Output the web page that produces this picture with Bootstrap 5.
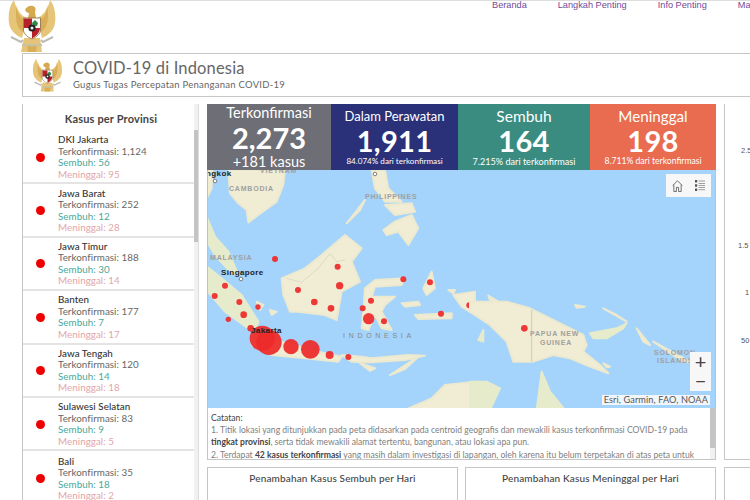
<!DOCTYPE html>
<html lang="id">
<head>
  <meta charset="UTF-8">
  <title>COVID-19 di Indonesia</title>
  <meta name="viewport" content="width=device-width, initial-scale=1">
  <link href="https://cdn.jsdelivr.net/npm/bootstrap@5.3.3/dist/css/bootstrap.min.css" rel="stylesheet">
  <style>
    html, body { height: 500px; overflow: hidden; }
    body { font-family: Lato, "Open Sans", sans-serif; color: #444; background: #fff; border-top: 1px solid #ddd; }

    /* top bar */
    .top-bar { height: 52px; }
    .top-logo { width: 48px; height: 53px; margin-left: 8px; margin-top: -1px; flex: none; }
    .top-links { position: absolute; left: 492px; top: 0; gap: 31px; white-space: nowrap; }
    .top-links a { font: 9.2px/9px "Liberation Sans", Arial, sans-serif; color: #6f4a9a; text-decoration: none; }

    /* page title */
    .title-box { margin-left: 22px; height: 44px; border: 1px solid #c6c6c6; border-right: 0; }
    .title-logo { width: 31px; height: 33px; margin: 0 10px 0 9px; flex: none; }
    .title-text { margin-bottom: 2px; }
    .title-main { font-size: 16.5px; line-height: 20px; color: #666; letter-spacing: .15px; }
    .title-sub { font-size: 9.5px; line-height: 12px; color: #666; margin-top: 1px; letter-spacing: .25px; }

    .main-grid { display: grid; grid-template-columns: 177px 509px 40px; column-gap: 8px; margin: 7px 0 0 22px; }

    /* province list */
    .prov-panel { height: 396px; overflow: hidden; border-left: 1px solid #c6c6c6; }
    .prov-title { font-size: 11px; font-weight: 700; color: #444; text-align: center; height: 27px; line-height: 29px; letter-spacing: .15px; }
    .prov-scroll { width: 5px; background: #f1f1f1; border-right: 1px solid #ddd; top: 0; right: 0; bottom: 0; }
    .prov-thumb { background: #c4c4c4; height: 112px; margin-top: 26px; }
    .prov-row { height: 53.4px; padding: 1px 5px 0 0; border-bottom: 2px solid #e4e4e4; font-size: 9.8px; line-height: 11.5px; letter-spacing: .05px; white-space: nowrap; }
    .prov-row:last-child { border-bottom: 0; }
    .prov-dot { width: 9px; height: 9px; border-radius: 50%; background: #ee0000; margin: 0 13px 0 13px; flex: none; }
    .prov-name { color: #333; font-weight: 500; }
    .prov-conf { color: #666; }
    .prov-heal { color: #4aa898; }
    .prov-dead { color: #e3a5a9; }

    /* counters */
    .stat-row { display: grid; grid-template-columns: 124px 127px 132px 126px; height: 66px; }
    .stat-cell { color: #fff; text-align: center; overflow: hidden; white-space: nowrap; }
    .stat-gray { background: #6d6e76; }
    .stat-navy { background: #2a3179; }
    .stat-teal { background: #3a8c80; }
    .stat-red { background: #e96b50; }
    .stat-head { font-size: 13px; line-height: 18px; padding-top: 3px; }
    .stat-big { font-size: 29px; font-weight: 700; line-height: 31px; letter-spacing: .3px; }
    .stat-foot { font-size: 8.1px; line-height: 11px; }
    .stat-gray .stat-head { font-size: 14.5px; padding-top: 0; }
    .stat-gray .stat-big { letter-spacing: 0; }
    .stat-gray .stat-foot { font-size: 14.5px; line-height: 16px; padding-top: 1px; }
    .stat-teal .stat-head { font-size: 15.5px; }
    .stat-teal .stat-foot { font-size: 9.1px; }
    .stat-red .stat-head { font-size: 15.2px; }
    .stat-red .stat-foot { font-size: 8.6px; }

    /* map */
    .map-box { height: 238px; background: #a4d3fb; border-left: 1px solid #c0c0c0; border-right: 1px solid #c0c0c0; overflow: hidden; }
    .map-box svg { display: block; }
    .map-tools { top: 4px; right: 4px; width: 45px; height: 23px; background: #f7f7f7; gap: 12px; }
    .map-zoom { right: 4px; top: 182px; width: 21px; height: 39px; background: #f7f7f7; color: #444; font-size: 20px; line-height: 19px; text-align: center; }
    .map-credit { right: 5px; top: 225px; height: 10px; padding: 0 2px; background: #f2f6fa; font-size: 9.2px; line-height: 10px; color: #555; letter-spacing: .1px; white-space: nowrap; }
    .land { fill: #f1edd4; stroke: #ece9cf; stroke-width: 6; stroke-linejoin: round; filter: blur(.5px); }
    .land-green { fill: #e6ebcb; stroke: #e6ebcb; }
    .spot { fill: #ee2a2a; fill-opacity: .93; }
    .map-label { font-family: "Liberation Sans", Arial, sans-serif; font-size: 7px; fill: #a0a0a0; letter-spacing: .8px; font-weight: 700; }
    .map-wide { letter-spacing: 3.7px; font-weight: 400; fill: #888; }
    .map-city { font-family: "Liberation Sans", Arial, sans-serif; font-size: 8px; fill: #222; font-weight: 700; letter-spacing: .4px; }

    /* notes */
    .note-box { height: 52px; overflow: hidden; border: 1px solid #c6c6c6; border-top: 0; padding: 4px 8px 0 3px; font-size: 8.6px; line-height: 12.2px; color: #808080; }
    .note-box b { color: #444; }
    .note-head { color: #444; }
    .note-scroll { width: 5px; top: 0; right: 0; bottom: 0; background: #f1f1f1; }
    .note-thumb { height: 40px; background: #c4c4c4; }

    /* lower cards */
    .lower-row { display: grid; grid-template-columns: 1fr 1fr; gap: 7px; margin-top: 7px; }
    .lower-card { height: 60px; border: 1px solid #c6c6c6; text-align: center; font-size: 10px; font-weight: 500; color: #444; padding-top: 4px; line-height: 13px; letter-spacing: .15px; }

    /* right column, chart cut off by the window edge */
    .side-chart { height: 356px; border-left: 1px solid #c6c6c6; border-bottom: 1px solid #c6c6c6; font: 7.5px/9px "Liberation Sans", Arial, sans-serif; color: #555; }
    .side-tick { left: 16px; }
    .tick-a { top: 42px; }
    .tick-b { top: 137px; left: 13px; }
    .tick-c { top: 184px; left: 20px; }
    .tick-d { top: 232px; left: 16px; }
    .side-lower { height: 60px; border: 1px solid #c6c6c6; border-right: 0; margin-top: 7px; }
  </style>
</head>
<body>

<svg width="0" height="0" class="position-absolute">
  <symbol id="garuda" viewBox="0 0 48 53">
    <path fill="#e6c578" d="M6 0C1 6 0 15 1 23c1 7 6 12 13 15l5-20C13 16 8 9 6 0Z"/>
    <path fill="#e6c578" d="M42 0c5 6 6 15 5 23-1 7-6 12-13 15l-5-20c6-2 11-9 13-18Z"/>
    <path fill="#d9ae58" d="M9 5c0 8 3 13 8 15l-2 12C10 29 6 22 9 5ZM39 5c0 8-3 13-8 15l2 12c5-3 9-10 6-27Z"/>
    <path fill="#d6a94f" d="M17 10c1-3 5-5 8-4 3 1 3 4 2 6l1 6H20l1-5c-2 0-3-1-4-3Z"/>
    <path fill="#e6c578" d="M16 38h16l2 14H13Z"/>
    <path fill="#d9ae58" d="M19 44h10l-1 8h-8Z"/>
    <path fill="none" stroke="#bdbdb5" stroke-width="2.2" d="M3 37l10 5 2-2M45 37l-10 5-2-2"/>
    <path fill="none" stroke="#c9c2a0" stroke-width="2.4" d="M14 45h20"/>
    <path fill="#fff" stroke="#7b5a2a" stroke-width=".7" d="M15.500 18h17v12c0 4-4 7-8.500 9-4.500-2-8.500-5-8.500-9Z"/>
    <path fill="#b5222a" d="M16 18.500h8V28h-8ZM24 28h8c0 5-4 8-8 10.500Z"/>
    <path fill="#2d8a45" d="M27 20l3 3-1 3h-4l-1-3Z"/>
    <circle cx="24" cy="28" r="3.600" fill="#222"/>
    <circle cx="24" cy="28" r="1.500" fill="#eee"/>
  </symbol>
</svg>

<div class="top-bar d-flex position-relative">
  <svg class="top-logo"><use href="#garuda"/></svg>
  <nav class="top-links d-flex">
    <a href="#">Beranda</a>
    <a href="#">Langkah Penting</a>
    <a href="#">Info Penting</a>
    <a href="#">Materi</a>
  </nav>
</div>

<div class="title-box d-flex align-items-center">
  <svg class="title-logo"><use href="#garuda"/></svg>
  <div class="title-text">
    <div class="title-main">COVID-19 di Indonesia</div>
    <div class="title-sub">Gugus Tugas Percepatan Penanganan COVID-19</div>
  </div>
</div>

<div class="main-grid">
  <!-- Provinces -->
  <div class="prov-panel position-relative">
    <div class="prov-title">Kasus per Provinsi</div>
    <div class="prov-scroll position-absolute"><div class="prov-thumb"></div></div>
    <div id="provList"></div>
  </div>

  <!-- Centre column -->
  <div>
    <div class="stat-row">
      <div class="stat-cell stat-gray">
        <div class="stat-head">Terkonfirmasi</div>
        <div class="stat-big">2,273</div>
        <div class="stat-foot">+181 kasus</div>
      </div>
      <div class="stat-cell stat-navy">
        <div class="stat-head">Dalam Perawatan</div>
        <div class="stat-big">1,911</div>
        <div class="stat-foot">84.074% dari terkonfirmasi</div>
      </div>
      <div class="stat-cell stat-teal">
        <div class="stat-head">Sembuh</div>
        <div class="stat-big">164</div>
        <div class="stat-foot">7.215% dari terkonfirmasi</div>
      </div>
      <div class="stat-cell stat-red">
        <div class="stat-head">Meninggal</div>
        <div class="stat-big">198</div>
        <div class="stat-foot">8.711% dari terkonfirmasi</div>
      </div>
    </div>

    <div class="map-box position-relative">
      <svg width="507" height="238" viewBox="1 0 507 238">
        <!-- west half, traced at 3x -->
        <g transform="translate(-2 -5) scale(.3333)">
          <path class="land" d="M70 15H240L235 60 215 110 160 150 130 172 125 135 100 115 75 85ZM0 15H22L20 70 5 100 0 110Z"/>
          <path class="land land-green" d="M5 155 30 215 70 260 100 330 75 320 30 270 0 220ZM0 300 50 340 110 390 160 470 150 500 130 490 60 440 0 370Z"/>
          <path class="land" d="M140 510 230 530 340 560 410 575 400 590 300 580 200 570 140 540ZM410 570 470 575 500 580 610 570 660 572 600 585 500 592 440 590ZM555 630 640 575 600 612ZM465 595 510 610 495 618Z"/>
          <path class="land" d="M230 340 300 310 350 270 420 210 470 250 440 290 465 350 410 380 395 465 360 450 280 440 255 440 235 390Z"/>
          <path fill="none" stroke="#c9c4b4" stroke-width="1.500" d="M245 340 290 352 340 310 375 265 395 290 420 285"/>
          <path class="land" d="M475 440 480 370 510 345 600 340 590 360 510 365 500 395 570 395 540 420 530 440 560 495 530 490 510 450 490 495 470 490ZM590 415 640 410 645 420 600 425Z"/>
          <path class="land" d="M500 15H540L550 70 590 110 540 110 510 70ZM535 195 570 170 620 150 640 190 610 240 580 200 545 210ZM425 175 480 105 465 135ZM540 120 620 115 630 140 570 150Z"/>
          <path class="land" d="M655 370 680 320 690 370 665 390ZM630 450 740 445 740 460 640 462ZM745 390 810 380 810 450 770 425ZM730 375 750 375 745 385ZM610 730 680 700 720 660 810 650 810 735 610 735ZM155 410 175 420 165 435ZM195 435 215 440 200 450Z"/>
          <g class="spots">
            <circle class="spot" cx="210" cy="282" r="9"/><circle class="spot" cx="398" cy="305" r="9"/>
            <circle class="spot" cx="60" cy="362" r="9"/><circle class="spot" cx="29" cy="393" r="9"/>
            <circle class="spot" cx="103" cy="411" r="9"/><circle class="spot" cx="159" cy="426" r="8"/>
            <circle class="spot" cx="116" cy="449" r="10"/><circle class="spot" cx="70" cy="463" r="8"/>
            <circle class="spot" cx="137" cy="490" r="10"/><circle class="spot" cx="279" cy="375" r="9"/>
            <circle class="spot" cx="404" cy="362" r="11"/><circle class="spot" cx="328" cy="411" r="10"/>
            <circle class="spot" cx="378" cy="430" r="10"/><circle class="spot" cx="595" cy="343" r="9"/>
            <circle class="spot" cx="675" cy="352" r="9"/><circle class="spot" cx="498" cy="407" r="9"/>
            <circle class="spot" cx="473" cy="430" r="9"/><circle class="spot" cx="491" cy="461" r="17"/>
            <circle class="spot" cx="537" cy="469" r="9"/><circle class="spot" cx="793" cy="421" r="9"/>
            <circle class="spot" cx="708" cy="446" r="9"/><circle class="spot" cx="172" cy="520" r="38"/>
            <circle class="spot" cx="192" cy="532" r="38"/><circle class="spot" cx="258" cy="545" r="23"/>
            <circle class="spot" cx="316" cy="553" r="28"/><circle class="spot" cx="374" cy="570" r="12"/>
            <circle class="spot" cx="430" cy="576" r="9"/>
          </g>
        </g>
        <!-- east half -->
        <g transform="translate(263 -5) scale(.3333)">
          <path class="land" d="M0 410 50 410 110 410 180 430 260 470 340 510 350 540 340 560 390 600 415 625 360 605 300 580 250 570 190 590 130 590 110 530 60 480 30 460 0 440Z"/>
          <path fill="none" stroke="#bdbab0" stroke-width="2" d="M185 435V590"/>
          <path class="land land-green" d="M360 505 440 490 470 475 460 490 410 520 370 520ZM0 650 50 650 90 670 60 735 0 735ZM200 735 215 620 240 680 285 735ZM25 525 40 495 40 530Z"/>
          <path class="land" d="M400 430 470 470 440 450ZM500 490 540 540 520 530ZM550 530 660 590 640 590ZM315 420 345 425 320 428ZM55 392 85 410 60 405ZM400 595 420 605 410 607Z"/>
          <circle class="spot" cx="163" cy="490" r="10"/>
        </g>
        <text class="map-label" x="22" y="21">CAMBODIA</text>
        <text class="map-label" x="53" y="3">VIETNAM</text>
        <text class="map-label" x="158" y="29">PHILIPPINES</text>
        <text class="map-label" x="3" y="90">MALAYSIA</text>
        <text class="map-label map-wide" x="136" y="168">INDONESIA</text>
        <text class="map-label" x="323" y="166">PAPUA NEW</text>
        <text class="map-label" x="333" y="175">GUINEA</text>
        <text class="map-label" x="447" y="185">SOLOMON</text>
        <text class="map-label" x="450" y="193">ISLANDS</text>
        <text class="map-city" x="-1" y="6">ngkok</text>
        <text class="map-city" x="14" y="105">Singapore</text>
        <text class="map-city" x="44" y="163">Jakarta</text>
        <circle cx="8" cy="11" r="1.800" fill="#fff" stroke="#666" stroke-width=".8"/>
        <circle cx="34" cy="109" r="1.800" fill="#fff" stroke="#666" stroke-width=".8"/>
        <circle cx="168" cy="4" r="1.800" fill="#fff" stroke="#666" stroke-width=".8"/>
      </svg>

      <div class="map-tools position-absolute d-flex align-items-center justify-content-center">
        <svg width="11" height="12" viewBox="0 0 12 13" fill="none" stroke="#666" stroke-width="1">
          <path d="M.8 6 6 .8 11.200 6M2 5v7.500h2.800V8h2.400v4.500H10V5"/>
        </svg>
        <svg width="10" height="11" viewBox="0 0 10 11" stroke="#888" stroke-width=".8">
          <path fill="#555" stroke="none" d="M0 0h2.200v2.500H0ZM0 4.200h2.200v2.500H0ZM0 8.400h2.200v2.500H0Z"/>
          <path fill="none" d="M3.500 1h6.500M3.500 3.500h6.500M3.500 5.500h6.500M3.500 7.500h6.500M3.500 9.700h6.500"/>
        </svg>
      </div>
      <div class="map-zoom position-absolute">
        <div>+</div>
        <div>&minus;</div>
      </div>
      <div class="map-credit position-absolute">Esri, Garmin, FAO, NOAA</div>
    </div>

    <div class="note-box position-relative">
      <div class="note-scroll position-absolute"><div class="note-thumb"></div></div>
      <div class="note-head">Catatan:</div>
      <div>1. Titik lokasi yang ditunjukkan pada peta didasarkan pada centroid geografis dan mewakili kasus terkonfirmasi COVID-19 pada <b>tingkat provinsi</b>, serta tidak mewakili alamat tertentu, bangunan, atau lokasi apa pun.</div>
      <div>2. Terdapat <b>42 kasus terkonfirmasi</b> yang masih dalam investigasi di lapangan, oleh karena itu belum terpetakan di atas peta untuk</div>
    </div>

    <div class="lower-row">
      <div class="lower-card">Penambahan Kasus Sembuh per Hari</div>
      <div class="lower-card">Penambahan Kasus Meninggal per Hari</div>
    </div>
  </div>

  <!-- Right column, mostly outside the window -->
  <div>
    <div class="side-chart position-relative">
      <span class="side-tick tick-a position-absolute">2.5</span>
      <span class="side-tick tick-b position-absolute">1.5</span>
      <span class="side-tick tick-c position-absolute">1</span>
      <span class="side-tick tick-d position-absolute">50</span>
    </div>
    <div class="side-lower"></div>
  </div>
</div>

<script src="https://cdn.jsdelivr.net/npm/bootstrap@5.3.3/dist/js/bootstrap.bundle.min.js"></script>
<script>
  const provinces = [
    ["DKI Jakarta", "1,124", 56, 95],
    ["Jawa Barat", "252", 12, 28],
    ["Jawa Timur", "188", 30, 14],
    ["Banten", "177", 7, 17],
    ["Jawa Tengah", "120", 14, 18],
    ["Sulawesi Selatan", "83", 9, 5],
    ["Bali", "35", 18, 2]
  ];

  document.getElementById("provList").innerHTML = provinces.map(p => `
    <div class="prov-row d-flex align-items-center">
      <span class="prov-dot"></span>
      <div>
        <div class="prov-name">${p[0]}</div>
        <div class="prov-conf">Terkonfirmasi: ${p[1]}</div>
        <div class="prov-heal">Sembuh: ${p[2]}</div>
        <div class="prov-dead">Meninggal: ${p[3]}</div>
      </div>
    </div>
  `).join("");
</script>
</body>
</html>
